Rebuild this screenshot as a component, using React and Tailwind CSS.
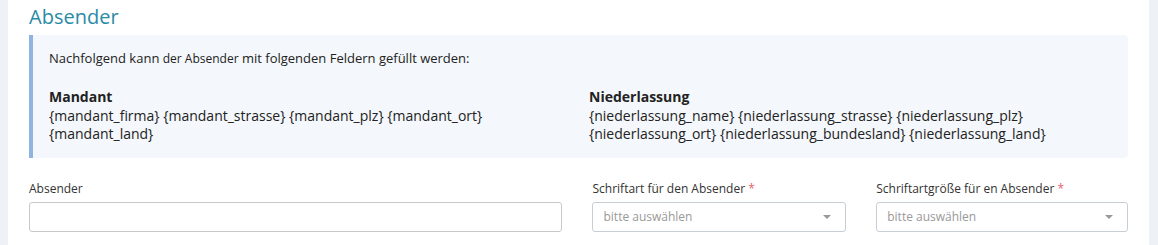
export default function App() {
  return (
    <div className="flex min-h-[245px] bg-[#eef1f6] font-['Open_Sans',sans-serif] text-[#222]">
      <div className="ml-[8px] w-[1141px] bg-white px-[21px]">
        <h2 className="pt-[4px] text-[20px] leading-[26px] text-[#2a8ba6]">Absender</h2>

        <div className="mt-[5px] rounded-r-[4px] border-l-4 border-[#8fb4e2] bg-[#f4f7fb] pl-[16px] pr-4 pt-[15px] pb-[16px] text-[14px] leading-[17px]">
          <p className="text-[13px]">
            Nachfolgend kann <span className="text-[12px]">der Absender</span> mit folgenden Feldern gefüllt werden:
          </p>

          <div className="mt-[20px] flex">
            <div className="w-[540px]">
              <p className="font-bold text-[14px] leading-[20px]">Mandant</p>
              <p className="leading-[17.5px]">
                {'{mandant_firma} {mandant_strasse} {mandant_plz} {mandant_ort}'}
                <br />
                {'{mandant_land}'}
              </p>
            </div>
            <div>
              <p className="font-bold text-[14px] leading-[20px]">Niederlassung</p>
              <p className="leading-[17.5px]">
                {'{niederlassung_name} {niederlassung_strasse} {niederlassung_plz}'}
                <br />
                {'{niederlassung_ort} {niederlassung_bundesland} {niederlassung_land}'}
              </p>
            </div>
          </div>
        </div>

        <div className="mt-[23px] flex gap-[30px] text-[12px]">
          <div className="w-[534px]">
            <label className="block leading-[16px] text-[#333]">Absender</label>
            <input
              type="text"
              className="mt-[5px] block h-[30px] w-full rounded-[3px] border border-[#c8c8c8] bg-white px-2 outline-none"
            />
          </div>
          <div className="w-[254px]">
            <label className="block leading-[16px] text-[#333]">
              Schriftart für den Absender <span className="text-[#e8616a]">*</span>
            </label>
            <div className="mt-[5px] flex h-[30px] items-center justify-between rounded-[3px] border border-[#c8ced6] bg-white pl-[10px] pr-[14px] text-[12px] text-[#999]">
              <span>bitte auswählen</span>
              <span className="h-0 w-0 border-x-[4px] border-t-[4px] border-x-transparent border-t-[#999]" />
            </div>
          </div>
          <div className="w-[252px]">
            <label className="block leading-[16px] text-[#333]">
              Schriftartgröße für en Absender <span className="text-[#e8616a]">*</span>
            </label>
            <div className="mt-[5px] flex h-[30px] items-center justify-between rounded-[3px] border border-[#c8ced6] bg-white pl-[10px] pr-[14px] text-[12px] text-[#999]">
              <span>bitte auswählen</span>
              <span className="h-0 w-0 border-x-[4px] border-t-[4px] border-x-transparent border-t-[#999]" />
            </div>
          </div>
        </div>
      </div>
    </div>
  )
}
